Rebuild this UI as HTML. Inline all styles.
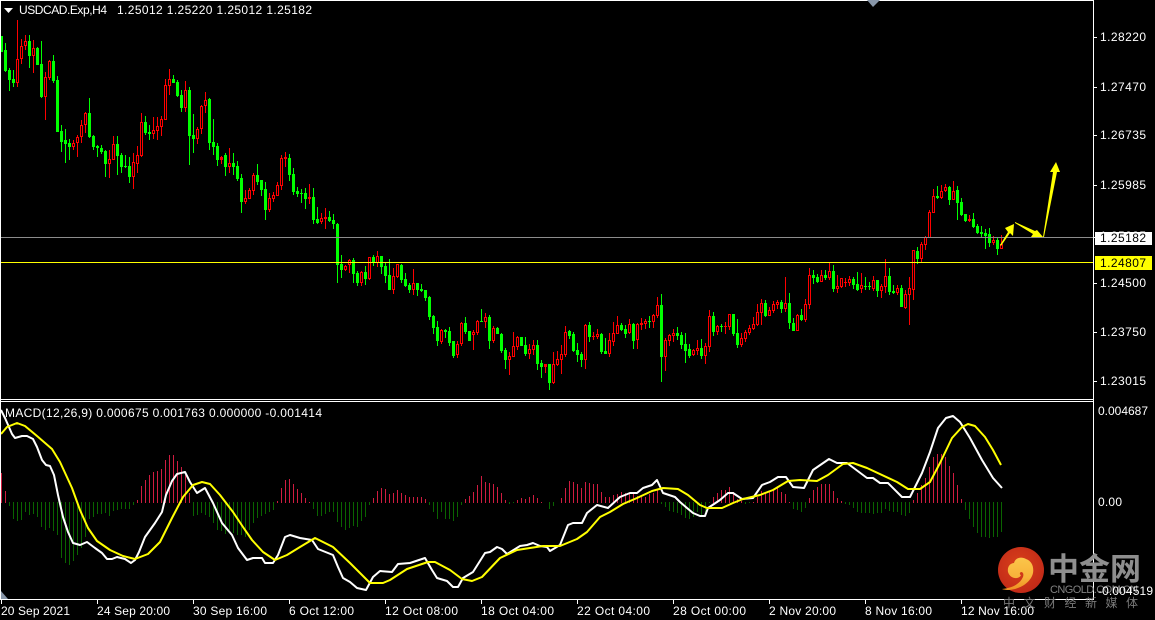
<!DOCTYPE html>
<html><head><meta charset="utf-8"><style>
html,body{margin:0;padding:0;background:#000;width:1155px;height:620px;overflow:hidden}
svg{display:block}
text{font-family:"Liberation Sans","Noto Sans CJK SC",sans-serif;font-size:12px;fill:#fff}
</style></head><body>
<svg width="1155" height="620" viewBox="0 0 1155 620" xmlns="http://www.w3.org/2000/svg">
<defs>
<radialGradient id="lg" cx="45%" cy="40%" r="60%"><stop offset="0" stop-color="#d8401a"/><stop offset="1" stop-color="#c22a18"/></radialGradient>
<linearGradient id="sw" x1="0" y1="0" x2="0" y2="1"><stop offset="0" stop-color="#fbc64a"/><stop offset=".6" stop-color="#f8b33a"/><stop offset="1" stop-color="#ee8f22"/></linearGradient>
</defs>
<rect width="1155" height="620" fill="#000"/>
<g transform="translate(.5,0)" fill="none" shape-rendering="crispEdges">
<!-- green wicks -->
<path stroke="#00ff00" d="M1 36V52M5 43V72M9 68V91M13 70V87M29 35V68M37 47V65M41 41V98M53 55V83M57 76V132M61 125V152M65 129V163M69 139V160M89 98V138M93 135V150M97 145V157M101 145V154M105 150V177M117 136V175M121 153V173M125 155V168M129 157V183M145 116V135M149 125V140M173 75V83M177 80V97M181 90V112M189 87V165M193 114V153M209 98V150M213 119V155M217 143V166M225 153V176M233 153V175M237 161V181M241 174V213M257 164V185M261 180V196M265 182V220M289 154V181M293 168V195M297 187V197M301 189V203M305 188V209M313 188V224M317 207V224M329 211V222M333 214V229M337 223V283M341 255V278M353 258V283M357 271V286M365 266V285M373 255V266M381 256V274M385 262V283M389 259V290M401 264V283M405 273V287M409 283V293M417 283V296M421 284V292M425 290V301M429 296V320M433 315V334M437 321V346M445 329V338M449 327V346M453 341V358M465 317V334M469 331V341M481 309V322M489 315V349M497 327V334M501 333V353M505 348V369M521 337V346M525 337V356M537 340V370M541 360V378M549 364V390M569 330V339M573 332V352M577 343V362M581 352V367M589 322V342M601 333V354M605 338V354M621 323V331M625 325V338M633 323V349M649 316V328M661 294V382M677 327V340M681 332V349M685 333V363M689 344V358M701 339V359M713 312V336M721 324V332M733 314V336M737 319V348M765 300V317M781 300V313M789 293V329M793 318V331M801 309V321M813 270V284M817 274V283M825 270V280M833 265V292M853 277V289M857 272V291M865 277V290M869 282V290M877 280V297M889 268V295M893 285V294M901 285V307M917 247V264M937 186V199M949 186V205M957 186V220M961 198V216M965 214V222M973 213V228M977 224V234M981 226V237M985 229V249M989 228V247M997 238V255"/>
<!-- green bodies -->
<path stroke="#00ff00" stroke-width="3" d="M1 36V52M5 50V71M9 70V80M13 79V83M29 41V56M37 48V65M41 64V97M53 61V81M57 80V132M61 131V142M65 140V144M69 143V147M89 113V137M93 136V147M97 146V148M101 148V152M105 151V164M117 144V156M121 155V167M125 166V167M129 166V177M145 122V133M149 132V134M173 79V83M177 82V96M181 95V108M189 90V136M193 135V139M209 99V143M213 142V147M217 146V160M225 155V167M233 163V167M237 166V179M241 178V202M257 175V182M261 180V190M265 189V210M289 158V175M293 174V192M297 191V194M301 193V194M305 193V199M313 197V220M317 219V223M329 217V221M333 220V224M337 224V265M341 264V270M353 260V274M357 273V283M365 272V279M373 257V263M381 256V267M385 266V276M389 275V290M401 265V280M405 279V286M409 285V290M417 283V290M421 289V291M425 290V298M429 297V317M433 316V328M437 327V341M445 330V332M449 331V343M453 341V356M465 323V332M469 331V341M481 321V322M489 317V341M497 328V334M501 334V351M505 350V360M521 337V346M525 345V354M537 345V364M541 363V367M549 364V383M569 331V336M573 334V351M577 350V355M581 354V360M589 325V337M601 334V352M605 351V354M621 325V330M625 329V334M633 324V341M649 321V322M661 305V357M677 333V336M681 335V345M685 344V351M689 349V356M701 348V356M713 316V332M721 326V327M733 314V334M737 333V345M765 303V316M781 302V309M789 303V323M793 323V331M801 315V320M813 275V278M817 277V282M825 275V278M833 271V289M853 279V285M857 284V290M865 286V287M869 286V287M877 280V291M889 276V292M893 291V293M901 288V307M917 251V259M937 196V198M949 187V200M957 190V203M961 202V215M965 214V221M973 219V227M977 226V233M981 232V234M985 233V236M989 234V243M997 240V249"/>
<!-- red wicks -->
<path stroke="#ff0000" d="M17 20V87M21 39V64M25 35V50M33 40V73M45 72V120M49 60V80M73 140V150M77 135V157M81 120V143M85 112V133M109 150V178M113 136V160M133 153V189M137 146V173M141 113V157M153 117V139M157 117V140M161 116V136M165 79V120M169 69V95M185 81V112M197 127V144M201 105V134M205 92V113M221 156V164M229 148V173M245 190V204M249 188V199M253 173V195M269 193V212M273 192V202M277 182V196M281 155V190M285 152V167M309 184V204M321 213V224M325 208V229M345 265V271M349 259V273M361 271V286M369 257V280M377 251V267M393 268V294M397 264V278M413 269V295M441 329V344M457 341V358M461 322V346M473 330V350M477 320V335M485 313V328M493 326V343M509 352V375M513 332V357M517 336V350M529 344V359M533 340V355M545 364V373M553 352V384M557 351V366M561 345V374M565 326V357M585 324V369M593 332V340M597 329V339M609 333V357M613 322V346M617 316V334M629 319V334M637 323V349M641 318V330M645 319V329M653 314V328M657 297V318M665 338V371M669 334V346M673 329V342M693 349V356M697 340V355M705 343V364M709 310V352M717 325V335M725 322V334M729 314V330M741 333V347M745 330V342M749 325V335M753 317V330M757 304V326M761 299V325M769 307V316M773 301V313M777 300V309M785 277V312M797 314V331M805 299V322M809 268V309M821 270V282M829 263V280M837 275V293M841 278V288M845 278V287M849 276V286M861 273V293M873 276V291M881 284V298M885 259V293M897 285V295M905 290V309M909 277V325M913 250V300M921 242V263M925 236V250M929 210V238M933 189V213M941 185V199M945 184V192M953 181V200M969 215V222M993 236V245M1001 235V249"/>
<!-- red bodies -->
<path stroke="#ff0000" stroke-width="3" d="M17 59V83M21 46V59M25 41V46M33 48V56M45 77V97M49 61V78M73 143V147M77 137V143M81 125V137M85 113V125M109 159V164M113 144V160M133 162V177M137 155V164M141 122V156M153 130V134M157 126V131M161 119V127M165 85V120M169 79V86M185 90V108M197 129V139M201 106V129M205 100V106M221 157V160M229 163V167M245 198V202M249 190V199M253 175V191M269 198V210M273 195V199M277 185V196M281 158V186M285 157V159M309 197V199M321 218V222M325 217V219M345 266V270M349 260V265M361 272V283M369 257V279M377 256V263M393 276V290M397 264V277M413 283V290M441 330V342M457 344V355M461 323V344M473 332V335M477 321V333M485 317V322M493 328V341M509 356V360M513 346V357M517 337V347M529 349V354M533 345V350M545 364V367M553 364V383M557 359V365M561 354V360M565 332V355M585 325V360M593 336V337M597 334V337M609 340V354M613 333V342M617 325V334M629 324V333M637 324V340M641 323V325M645 321V324M653 315V322M657 305V316M665 340V357M669 335V341M673 333V336M693 350V355M697 348V351M705 346V356M709 316V347M717 326V332M725 326V327M729 314V327M741 338V345M745 332V339M749 328V333M753 324V329M757 312V325M761 303V313M769 310V316M773 304V311M777 302V305M785 303V309M797 315V331M805 304V320M809 275V305M821 275V282M829 271V278M837 286V289M841 278V287M845 282V283M849 279V283M861 285V289M873 280V289M881 286V291M885 276V287M897 288V293M905 294V308M909 288V295M913 250V290M921 244V259M925 237V245M929 212V238M933 196V213M941 191V198M945 187V191M953 191V200M969 219V221M993 240V243M1001 244V249"/>
<!-- hollow centres of red candles -->
<path stroke="#000" d="M17 60V82M21 47V58M25 42V45M33 49V55M45 78V96M49 62V77M73 144V146M77 138V142M81 126V136M85 114V124M109 160V163M113 145V159M133 163V176M137 156V163M141 123V155M153 131V133M157 127V130M161 120V126M165 86V119M169 80V85M185 91V107M197 130V138M201 107V128M205 101V105M229 164V166M245 199V201M249 191V198M253 176V190M269 199V209M273 196V198M277 186V195M281 159V185M321 219V221M345 267V269M349 261V264M361 273V282M369 258V278M377 257V262M393 277V289M397 265V276M413 284V289M441 331V341M457 345V354M461 324V343M473 333V334M477 322V332M485 318V321M493 329V340M509 357V359M513 347V356M517 338V346M529 350V353M533 346V349M553 365V382M557 360V364M561 355V359M565 333V354M585 326V359M597 335V336M609 341V353M613 334V341M617 326V333M629 325V332M637 325V339M645 322V323M653 316V321M657 306V315M665 341V356M669 336V340M673 334V335M693 351V354M697 349V350M705 347V355M709 317V346M717 327V331M729 315V326M741 339V344M745 333V338M749 329V332M753 325V328M757 313V324M761 304V312M769 311V315M773 305V310M777 303V304M785 304V308M797 316V330M805 305V319M809 276V304M821 276V281M829 272V277M837 287V288M841 279V286M849 280V282M861 286V288M873 281V288M881 287V290M885 277V286M897 289V292M905 295V307M909 289V294M913 251V289M921 245V258M925 238V244M929 213V237M933 197V212M941 192V197M945 188V190M953 192V199M969 220V220M993 241V242M1001 245V248"/>
</g>
<!-- horizontal levels -->
<g shape-rendering="crispEdges">
<rect x="1" y="237" width="1092" height="1" fill="#8c8c8c"/>
<rect x="1" y="262" width="1092" height="1" fill="#ffff00"/>
</g>
<!-- arrows -->
<polygon fill="#ffff00" points="1000,245 1008,232 1005,228 1014,224 1013,236 1010,233 1001,246"/>
<polygon fill="#ffff00" points="1015,222 1035,231 1037,230 1043,237 1031,237 1033,234 1015,223"/>
<polygon fill="#ffff00" points="1043,237 1053,172 1050,172 1056,162 1060,172 1057,172 1044,237"/>
<!-- histogram -->
<g transform="translate(.5,0)" fill="none" shape-rendering="crispEdges">
<path stroke="#d01c40" d="M1 473V503M5 491V503M137 500V503M141 486V503M145 480V503M149 475V503M153 472V503M157 471V503M161 469V503M165 460V503M169 455V503M173 455V503M177 461V503M181 467V503M185 475V503M189 493V503M277 501V503M281 488V503M285 480V503M289 479V503M293 484V503M297 489V503M301 493V503M305 498V503M309 502V503M373 498V503M377 491V503M381 488V503M385 489V503M389 494V503M393 493V503M397 490V503M401 493V503M405 495V503M409 497V503M413 497V503M417 497V503M421 497V503M425 499V503M465 499V503M469 496V503M473 492V503M477 485V503M481 476V503M485 482V503M489 483V503M493 484V503M497 487V503M501 493V503M505 500V503M517 500V503M521 498V503M525 499V503M529 497V503M533 495V503M537 498V503M541 502V503M561 498V503M565 488V503M569 481V503M573 482V503M577 484V503M581 488V503M585 482V503M589 483V503M593 484V503M597 484V503M601 492V503M605 497V503M609 497V503M613 495V503M617 494V503M621 492V503M625 493V503M629 493V503M633 493V503M637 496V503M641 497V503M645 497V503M649 494V503M653 493V503M657 490V503M713 497V503M717 493V503M721 490V503M725 490V503M729 487V503M733 492V503M737 499V503M741 501V503M753 502V503M757 497V503M761 491V503M765 493V503M769 492V503M773 490V503M777 488V503M781 492V503M785 494V503M789 502V503M809 498V503M813 490V503M817 487V503M821 484V503M825 484V503M829 484V503M833 491V503M837 498V503M841 501V503M913 500V503M917 493V503M921 485V503M925 478V503M929 467V503M933 457V503M937 454V503M941 454V503M945 457V503M949 466V503M953 473V503M957 485V503M961 499V503"/>
<path stroke="#0a6400" d="M9 502V506M13 502V519M17 502V521M21 502V520M25 502V512M29 502V515M33 502V514M37 502V517M41 502V527M45 502V530M49 502V528M53 502V531M57 502V535M61 502V558M65 502V563M69 502V565M73 502V561M77 502V555M81 502V548M85 502V537M89 502V519M93 502V517M97 502V514M101 502V514M105 502V513M109 502V516M113 502V511M117 502V510M121 502V509M125 502V509M129 502V509M133 502V505M193 502V516M197 502V515M201 502V513M205 502V515M209 502V517M213 502V523M217 502V530M221 502V531M225 502V534M229 502V530M233 502V533M237 502V535M241 502V535M245 502V537M249 502V530M253 502V523M257 502V518M261 502V516M265 502V514M269 502V512M273 502V510M313 502V509M317 502V516M321 502V516M325 502V514M329 502V512M333 502V512M337 502V522M341 502V527M345 502V530M349 502V528M353 502V526M357 502V527M361 502V521M365 502V517M369 502V505M429 502V505M433 502V512M437 502V519M441 502V512M445 502V519M449 502V519M453 502V521M457 502V517M461 502V505M509 502V504M513 502V503M549 502V509M553 502V506M661 502V504M665 502V507M669 502V511M673 502V512M677 502V513M681 502V515M685 502V518M689 502V519M693 502V517M697 502V512M701 502V516M705 502V512M709 502V503M745 502V504M749 502V503M793 502V509M797 502V510M801 502V512M805 502V508M845 502V504M849 502V505M853 502V508M857 502V512M861 502V513M865 502V513M869 502V513M873 502V514M877 502V513M881 502V513M885 502V509M889 502V511M893 502V512M897 502V512M901 502V515M905 502V516M909 502V513M965 502V510M969 502V519M973 502V527M977 502V533M981 502V537M985 502V537M989 502V538M993 502V537M997 502V537M1001 502V532"/>
</g>
<!-- MACD lines -->
<polyline fill="none" stroke="#fff" stroke-width="2" stroke-linejoin="round" points="1,410 5,418 12,434 15,438 22,436 27,436 33,439 37,447 42,460 46,465 50,466 54,475 58,495 63,517 68,532 73,543 80,545 87,542 95,548 102,553 107,559 112,559 117,557 125,559 131,563 135,560 139,552 145,537 155,523 162,512 166,495 172,481 177,474 185,472 190,482 197,493 205,488 213,503 222,523 232,535 238,548 247,560 253,558 262,558 265,563 273,563 278,555 285,537 290,535 300,538 312,540 318,549 333,555 338,567 343,578 350,582 357,588 366,590 373,577 380,571 392,572 398,564 410,563 425,558 432,570 437,578 447,581 453,587 458,587 463,578 473,572 485,553 490,552 497,547 502,549 507,554 520,546 527,545 533,543 540,546 547,547 550,551 560,545 568,525 573,523 582,523 587,513 597,505 608,508 620,497 630,493 637,493 643,488 652,485 657,480 663,493 675,497 680,502 687,508 693,513 700,516 705,516 708,508 720,500 728,493 733,493 742,499 753,498 762,485 770,482 778,477 786,477 793,487 804,488 813,470 829,459 837,463 847,463 867,478 873,478 880,483 888,483 902,497 910,497 922,473 930,452 938,428 946,418 953,416 960,422 970,438 982,460 993,478 1002,488"/>
<polyline fill="none" stroke="#ffff00" stroke-width="2" stroke-linejoin="round" points="1,434 7,427 17,423 25,426 37,436 52,449 60,462 72,488 80,510 88,528 97,541 110,550 123,556 135,559 148,554 160,542 172,518 183,497 193,485 202,482 210,484 220,495 233,512 243,527 252,540 263,552 275,560 287,555 300,547 315,538 333,547 350,563 370,583 383,583 390,580 407,569 428,562 435,562 450,570 462,579 472,581 482,577 500,558 517,550 543,546 560,546 577,539 587,532 600,517 610,512 623,504 637,498 652,491 663,488 678,489 688,495 700,505 707,508 722,508 733,503 743,499 760,495 773,490 788,481 800,480 817,481 828,475 843,464 853,463 867,468 897,482 908,489 920,489 930,482 940,463 952,438 962,427 968,424 975,426 985,437 993,450 1001,465"/>
<!-- frame -->
<g shape-rendering="crispEdges" fill="#fff">
<rect x="0" y="0" width="1094" height="1"/>
<rect x="0" y="0" width="1" height="600"/>
<rect x="1093" y="0" width="1" height="600"/>
<rect x="0" y="399" width="1094" height="1"/>
<rect x="0" y="401" width="1094" height="1"/>
<rect x="0" y="599" width="1094" height="1"/>
<path d="M1094 37h3v1h-3zM1094 87h3v1h-3zM1094 135h3v1h-3zM1094 185h3v1h-3zM1094 237h3v1h-3zM1094 283h3v1h-3zM1094 332h3v1h-3zM1094 381h3v1h-3z"/>
<path d="M1 600h1v4h-1zM97 600h1v4h-1zM193 600h1v4h-1zM289 600h1v4h-1zM385 600h1v4h-1zM481 600h1v4h-1zM577 600h1v4h-1zM673 600h1v4h-1zM769 600h1v4h-1zM865 600h1v4h-1zM961 600h1v4h-1z"/>
</g>
<polygon points="867,0 880,0 873,7" fill="#8896a8"/>
<polygon points="1,591 8,599 1,599" fill="#8896a8"/>
<polygon points="4,8 13,8 8.5,13" fill="#fff"/>
<!-- texts -->
<text x="19" y="14" textLength="88" lengthAdjust="spacing">USDCAD.Exp,H4</text>
<text x="117" y="14" textLength="195" lengthAdjust="spacing">1.25012 1.25220 1.25012 1.25182</text>
<text x="5" y="417" textLength="317" lengthAdjust="spacing">MACD(12,26,9) 0.000675 0.001763 0.000000 -0.001414</text>
<g>
<text x="1100" y="41" textLength="46">1.28220</text>
<text x="1100" y="91" textLength="46">1.27470</text>
<text x="1100" y="139" textLength="46">1.26735</text>
<text x="1100" y="189" textLength="46">1.25985</text>
<text x="1100" y="240" textLength="46">1.25235</text>
<rect x="1095" y="232" width="57" height="13" fill="#fff"/>
<text x="1100" y="242" textLength="46" style="fill:#000">1.25182</text>
<rect x="1095" y="256" width="57" height="14" fill="#ffff00"/>
<text x="1100" y="267" textLength="46" style="fill:#000">1.24807</text>
<text x="1100" y="287" textLength="46">1.24500</text>
<text x="1100" y="336" textLength="46">1.23750</text>
<text x="1100" y="385" textLength="46">1.23015</text>
<text x="1098" y="415" textLength="50">0.004687</text>
<text x="1098" y="506" textLength="24">0.00</text>
</g>
<g>
<text x="1" y="615" textLength="69">20 Sep 2021</text>
<text x="97" y="615" textLength="73">24 Sep 20:00</text>
<text x="193" y="615" textLength="74">30 Sep 16:00</text>
<text x="289" y="615" textLength="65">6 Oct 12:00</text>
<text x="385" y="615" textLength="73">12 Oct 08:00</text>
<text x="481" y="615" textLength="73">18 Oct 04:00</text>
<text x="577" y="615" textLength="73">22 Oct 04:00</text>
<text x="673" y="615" textLength="73">28 Oct 00:00</text>
<text x="769" y="615" textLength="67">2 Nov 20:00</text>
<text x="865" y="615" textLength="67">8 Nov 16:00</text>
<text x="961" y="615" textLength="73">12 Nov 16:00</text>
</g>
<!-- logo -->
<circle cx="1021" cy="570" r="23" fill="url(#lg)"/>
<path d="M1008 572C1007 566 1011 563 1014 563C1015 558 1021 556 1026 559C1032 561 1034 567 1033 573C1031 582 1021 589 1009 590C1004 590 1002 589 1002 589C1012 588 1020 584 1023 577C1024 574 1023 572 1021 572C1019 573 1020 575 1021 575C1019 580 1010 579 1008 572Z" fill="url(#sw)"/>
<text x="1048" y="580" textLength="93" style="font-size:31px;font-weight:bold;fill:#8e8e8e">中金网</text>
<text x="1050" y="593" textLength="88" style="font-size:11px;fill:#808080">CNGOLD.COM.CN</text>
<text x="1003" y="607" textLength="135" style="font-size:12px;fill:#7a7a7a">中文财经新媒体</text>
<text x="1098" y="595" textLength="55">-0.004519</text>
</svg>
</body></html>
